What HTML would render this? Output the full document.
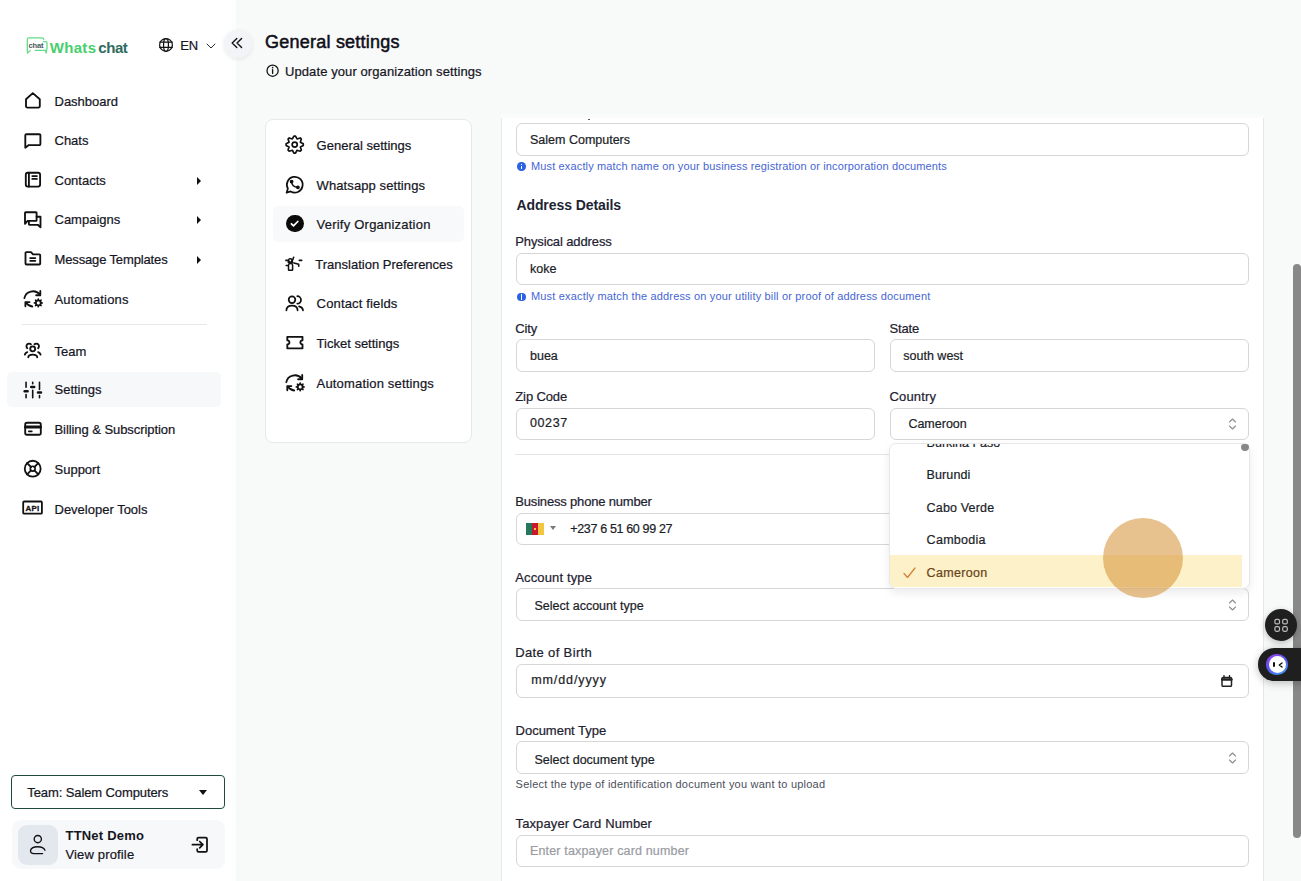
<!DOCTYPE html>
<html><head><meta charset="utf-8"><style>
*{box-sizing:border-box;margin:0;padding:0}
html,body{width:1301px;height:881px;overflow:hidden}
body{font-family:"Liberation Sans",sans-serif;background:#f8f9f9;position:relative;color:#16161f}
.a{position:absolute;white-space:nowrap;line-height:1;-webkit-text-stroke:0.22px currentColor}
.ic{position:absolute;display:block;color:#111}
.box{position:absolute;background:#fff;border:1px solid #d6d6d6;border-radius:6px}
</style></head><body>
<div style="position:absolute;left:0;top:0;width:232px;height:881px;background:#fff"></div>
<div style="position:absolute;left:232px;top:0;width:4px;height:881px;background:#fcfdfd"></div>
<svg style="position:absolute;left:0;top:0" width="240" height="70" fill="none" stroke-linecap="round" stroke-linejoin="round"><path d="M43.8 39.3 Q43.5 37.9 42 37.9 H29 Q27.3 37.9 27.3 39.7 V50.5 L27.6 53.1 L30.2 50.4" stroke="#62dc86" stroke-width="1.3"/><path d="M43.4 41.7 H45.6 Q47 41.7 47 43.1 V48.9 Q47 50.3 45.6 50.3 H35.2 M45.1 50.3 L46.3 53.1 V50.6" stroke="#62dc86" stroke-width="1.3"/><text x="28.6" y="47.8" font-family="Liberation Sans" font-size="7.6" font-weight="bold" fill="#48595b" letter-spacing="-0.2">chat</text></svg>
<div class="a " style="left:49.8px;top:39.80px;font-size:15px;color:#47cf6d;font-weight:bold;-webkit-text-stroke:0;letter-spacing:0.3px;">Whats</div>
<div class="a " style="left:98.3px;top:39.80px;font-size:15px;color:#2f6a5d;font-weight:bold;-webkit-text-stroke:0;letter-spacing:-0.45px;">chat</div>
<div class="a " style="left:180.2px;top:39.00px;font-size:13px;color:#16161f;">EN</div>
<svg class="ic" style="left:206px;top:43px;" width="10" height="6" viewBox="0 0 10 6" fill="none" stroke="currentColor" stroke-linecap="round" stroke-linejoin="round" stroke-width="0.9"><path d="M1 1l4 4 4-4"/></svg>
<div style="position:absolute;left:223.5px;top:30px;width:28px;height:28px;border-radius:50%;background:#f3f4f7;box-shadow:0 1px 4px rgba(0,0,0,.09)"></div>
<div style="position:absolute;left:7px;top:372px;width:214px;height:35px;border-radius:5px;background:#f7f8fa"></div>
<div class="a " style="left:54.5px;top:94.50px;font-size:13px;color:#16161f;">Dashboard</div>
<div class="a " style="left:54.5px;top:134.00px;font-size:13px;color:#16161f;">Chats</div>
<div class="a " style="left:54.5px;top:173.80px;font-size:13px;color:#16161f;">Contacts</div>
<div class="a " style="left:54.5px;top:213.20px;font-size:13px;color:#16161f;">Campaigns</div>
<div class="a " style="left:54.5px;top:253.00px;font-size:13px;color:#16161f;letter-spacing:-0.14px;">Message Templates</div>
<div class="a " style="left:54.5px;top:292.80px;font-size:13px;color:#16161f;letter-spacing:0.17px;">Automations</div>
<div class="a " style="left:54.5px;top:344.50px;font-size:13px;color:#16161f;">Team</div>
<div class="a " style="left:54.5px;top:383.30px;font-size:13px;color:#16161f;">Settings</div>
<div class="a " style="left:54.5px;top:423.00px;font-size:13px;color:#16161f;letter-spacing:-0.07px;">Billing &amp; Subscription</div>
<div class="a " style="left:54.5px;top:463.00px;font-size:13px;color:#16161f;">Support</div>
<div class="a " style="left:54.5px;top:502.50px;font-size:13px;color:#16161f;">Developer Tools</div>
<div style="position:absolute;left:197px;top:176.5px;width:0;height:0;border-top:4px solid transparent;border-bottom:4px solid transparent;border-left:4.5px solid #111"></div>
<div style="position:absolute;left:197px;top:215.9px;width:0;height:0;border-top:4px solid transparent;border-bottom:4px solid transparent;border-left:4.5px solid #111"></div>
<div style="position:absolute;left:197px;top:255.7px;width:0;height:0;border-top:4px solid transparent;border-bottom:4px solid transparent;border-left:4.5px solid #111"></div>
<div style="position:absolute;left:21.5px;top:324px;width:185px;height:1px;background:#e5e7eb"></div>
<div style="position:absolute;left:11px;top:775px;width:214px;height:34px;border:1px solid #1f4a3c;border-radius:4px;background:#fff"></div>
<div class="a " style="left:27.3px;top:786.30px;font-size:13px;color:#16161f;letter-spacing:-0.1px;">Team: Salem Computers</div>
<div style="position:absolute;left:199px;top:790px;width:0;height:0;border-left:4.5px solid transparent;border-right:4.5px solid transparent;border-top:5px solid #111"></div>
<div style="position:absolute;left:12px;top:820px;width:213px;height:49px;border-radius:9px;background:#f7f8fa"></div>
<div style="position:absolute;left:18px;top:825px;width:40px;height:40px;border-radius:9px;background:#e3e7ee"></div>
<div class="a " style="left:65.5px;top:828.70px;font-size:13px;color:#16161f;font-weight:bold;-webkit-text-stroke:0;letter-spacing:0.2px;">TTNet Demo</div>
<div class="a " style="left:65.5px;top:848.00px;font-size:13px;color:#16161f;letter-spacing:0.15px;">View profile</div>
<div class="a " style="left:265px;top:32.76px;font-size:18px;color:#0e0e18;letter-spacing:0.23px;-webkit-text-stroke:0.5px #0e0e18;">General settings</div>
<div class="a " style="left:285px;top:64.70px;font-size:13px;color:#16161f;letter-spacing:0.09px;">Update your organization settings</div>
<div style="position:absolute;left:265px;top:119px;width:206.5px;height:324px;background:#fff;border:1px solid #e7e8eb;border-radius:8px"></div>
<div style="position:absolute;left:273px;top:206px;width:191px;height:36px;border-radius:5px;background:#f8f9fa"></div>
<div class="a " style="left:316.6px;top:139.00px;font-size:13px;color:#16161f;">General settings</div>
<div class="a " style="left:316.6px;top:179.00px;font-size:13px;color:#16161f;letter-spacing:0.09px;">Whatsapp settings</div>
<div class="a " style="left:316.6px;top:218.00px;font-size:13px;color:#16161f;letter-spacing:0.22px;">Verify Organization</div>
<div class="a " style="left:315.3px;top:258.40px;font-size:13px;color:#16161f;">Translation Preferences</div>
<div class="a " style="left:316.6px;top:297.30px;font-size:13px;color:#16161f;letter-spacing:0.15px;">Contact fields</div>
<div class="a " style="left:316.6px;top:337.00px;font-size:13px;color:#16161f;">Ticket settings</div>
<div class="a " style="left:316.6px;top:376.50px;font-size:13px;color:#16161f;letter-spacing:0.17px;">Automation settings</div>
<div style="position:absolute;left:285.8px;top:214.7px;width:17.8px;height:17.8px;border-radius:50%;background:#0b0b0b"></div>
<svg style="position:absolute;left:0;top:0" width="1301" height="881" fill="none" stroke="#fff" stroke-width="1.75" stroke-linecap="round" stroke-linejoin="round"><path d="M291.4 223.8 L293.5 225.9 L297.8 221.5"/></svg>
<div style="position:absolute;left:501px;top:118px;width:763px;height:780px;background:#fff;border-left:1px solid #e7e8eb;border-right:1px solid #e7e8eb"></div>
<div style="position:absolute;left:501px;top:112px;width:763px;height:6px;background:linear-gradient(rgba(255,255,255,0),rgba(255,255,255,.6))"></div>
<div style="position:absolute;left:588px;top:118.6px;width:2.2px;height:1px;background:#444;border-radius:1px"></div>
<div class="box" style="left:516px;top:123px;width:733px;height:33px"></div>
<div class="a " style="left:530px;top:133.72px;font-size:12.5px;color:#1b1e28;">Salem Computers</div>
<div style="position:absolute;left:517px;top:162.3px;width:8.5px;height:8.5px;border-radius:50%;background:#2b62e3"></div>
<div style="position:absolute;left:520.7px;top:165.8px;width:1.2px;height:3.3px;background:#fff"></div>
<div style="position:absolute;left:520.7px;top:163.9px;width:1.2px;height:1.2px;background:#fff"></div>
<div class="a " style="left:531px;top:161.19px;font-size:11px;color:#4666d4;letter-spacing:0.14px;-webkit-text-stroke:0;">Must exactly match name on your business registration or incorporation documents</div>
<div class="a " style="left:516.4px;top:197.95px;font-size:14px;color:#1d2433;font-weight:bold;-webkit-text-stroke:0;letter-spacing:-0.08px;">Address Details</div>
<div class="a " style="left:515.3px;top:235.10px;font-size:13px;color:#1e2230;letter-spacing:-0.12px;">Physical address</div>
<div class="box" style="left:516px;top:253px;width:733px;height:32px"></div>
<div class="a " style="left:530px;top:262.62px;font-size:12.5px;color:#1b1e28;">koke</div>
<div style="position:absolute;left:517px;top:292.8px;width:8.5px;height:8.5px;border-radius:50%;background:#2b62e3"></div>
<div style="position:absolute;left:520.7px;top:296.3px;width:1.2px;height:3.3px;background:#fff"></div>
<div style="position:absolute;left:520.7px;top:294.40000000000003px;width:1.2px;height:1.2px;background:#fff"></div>
<div class="a " style="left:531px;top:291.09px;font-size:11px;color:#4666d4;letter-spacing:0.17px;-webkit-text-stroke:0;">Must exactly match the address on your utility bill or proof of address document</div>
<div class="a " style="left:515.3px;top:321.90px;font-size:13px;color:#1e2230;letter-spacing:-0.12px;">City</div>
<div class="a " style="left:889.4px;top:321.90px;font-size:13px;color:#1e2230;letter-spacing:-0.12px;">State</div>
<div class="box" style="left:516px;top:339px;width:359px;height:33px"></div>
<div class="box" style="left:890px;top:339px;width:359px;height:33px"></div>
<div class="a " style="left:530px;top:350.42px;font-size:12.5px;color:#1b1e28;">buea</div>
<div class="a " style="left:903.3px;top:350.42px;font-size:12.5px;color:#1b1e28;">south west</div>
<div class="a " style="left:515.3px;top:390.00px;font-size:13px;color:#1e2230;letter-spacing:-0.12px;">Zip Code</div>
<div class="a " style="left:889.4px;top:390.00px;font-size:13px;color:#1e2230;letter-spacing:0.2px;">Country</div>
<div class="box" style="left:516px;top:408px;width:359px;height:32px"></div>
<div class="box" style="left:890px;top:408px;width:359px;height:32px"></div>
<div class="a " style="left:530px;top:417.12px;font-size:12.5px;color:#1b1e28;letter-spacing:0.6px;">00237</div>
<div class="a " style="left:908.4px;top:418.12px;font-size:12.5px;color:#1b1e28;">Cameroon</div>
<svg class="ic" style="left:1228.3px;top:416.8px;color:#8b8d92" width="9" height="14" viewBox="0 0 9 14" fill="none" stroke="currentColor" stroke-linecap="round" stroke-linejoin="round" stroke-width="1.1"><path d="M1.5 5L4.5 2l3 3M1.5 9l3 3 3-3"/></svg>
<div style="position:absolute;left:515px;top:454px;width:734px;height:1px;background:#e3e4e4"></div>
<div class="a " style="left:515.3px;top:494.80px;font-size:13px;color:#1e2230;letter-spacing:-0.18px;">Business phone number</div>
<div class="box" style="left:516px;top:513px;width:733px;height:32px"></div>
<div style="position:absolute;left:526px;top:522.7px;width:6px;height:12.3px;background:#23795a"></div>
<div style="position:absolute;left:532px;top:522.7px;width:6px;height:12.3px;background:#c8182f"></div>
<div style="position:absolute;left:538px;top:522.7px;width:6.3px;height:12.3px;background:#f3c63f"></div>
<div style="position:absolute;left:534.2px;top:527.8px;width:1.8px;height:1.8px;background:#f3c63f"></div>
<div style="position:absolute;left:550.3px;top:526.3px;width:0;height:0;border-left:3.2px solid transparent;border-right:3.2px solid transparent;border-top:4px solid #7a7a7a"></div>
<div class="a " style="left:570.3px;top:523.42px;font-size:12.5px;color:#1b1e28;letter-spacing:-0.35px;">+237 6 51 60 99 27</div>
<div class="a " style="left:515.3px;top:571.20px;font-size:13px;color:#1e2230;letter-spacing:0.13px;">Account type</div>
<div class="box" style="left:516px;top:588px;width:733px;height:33px"></div>
<div class="a " style="left:534.5px;top:600.42px;font-size:12.5px;color:#1b1e28;">Select account type</div>
<svg class="ic" style="left:1228.3px;top:598px;color:#8b8d92" width="9" height="14" viewBox="0 0 9 14" fill="none" stroke="currentColor" stroke-linecap="round" stroke-linejoin="round" stroke-width="1.1"><path d="M1.5 5L4.5 2l3 3M1.5 9l3 3 3-3"/></svg>
<div class="a " style="left:515.3px;top:646.00px;font-size:13px;color:#1e2230;letter-spacing:0.35px;">Date of Birth</div>
<div class="box" style="left:516px;top:664px;width:733px;height:34px"></div>
<div class="a " style="left:531.2px;top:674.22px;font-size:12.5px;color:#1b1e28;letter-spacing:0.9px;">mm/dd/yyyy</div>
<svg class="ic" style="left:1221px;top:675px;color:#222" width="11.5" height="12" viewBox="0 0 11.5 12" fill="none" stroke="currentColor" stroke-linecap="round" stroke-linejoin="round"><rect x="1" y="2.5" width="9.5" height="8.8" rx="1" stroke-width="1.5"/><path d="M1 4.5h9.5" stroke-width="2.5"/><path d="M3 .5v2.5M8.5.5v2.5" stroke-width="1.3"/></svg>
<div class="a " style="left:515.6px;top:724.40px;font-size:13px;color:#1e2230;letter-spacing:-0.02px;">Document Type</div>
<div class="box" style="left:516px;top:741px;width:733px;height:33px"></div>
<div class="a " style="left:534.5px;top:753.92px;font-size:12.5px;color:#1b1e28;">Select document type</div>
<svg class="ic" style="left:1228.3px;top:751px;color:#8b8d92" width="9" height="14" viewBox="0 0 9 14" fill="none" stroke="currentColor" stroke-linecap="round" stroke-linejoin="round" stroke-width="1.1"><path d="M1.5 5L4.5 2l3 3M1.5 9l3 3 3-3"/></svg>
<div class="a " style="left:515.6px;top:778.89px;font-size:11px;color:#4b4f5a;letter-spacing:0.225px;-webkit-text-stroke:0;">Select the type of identification document you want to upload</div>
<div class="a " style="left:515.6px;top:817.20px;font-size:13px;color:#1e2230;letter-spacing:0.1px;">Taxpayer Card Number</div>
<div class="box" style="left:516px;top:835px;width:733px;height:32px"></div>
<div class="a " style="left:530px;top:845.02px;font-size:12.5px;color:#9a9ca3;letter-spacing:0.16px;">Enter taxpayer card number</div>
<div style="position:absolute;left:889px;top:443px;width:361px;height:145.5px;background:#fff;border:1px solid #e8e8e8;border-radius:7px;box-shadow:0 4px 10px rgba(0,0,0,.08);overflow:hidden">
<div style="position:absolute;left:0;top:111px;width:352px;height:32px;background:#fcf1c9"></div>
</div>
<div style="position:absolute;left:890px;top:444px;width:359px;height:144px;overflow:hidden">
<div class="a " style="left:36.6px;top:-7.28px;font-size:12.5px;color:#1b1e28;">Burkina Faso</div>
</div>
<div class="a " style="left:926.6px;top:469.42px;font-size:12.5px;color:#1b1e28;letter-spacing:0.1px;">Burundi</div>
<div class="a " style="left:926.6px;top:502.22px;font-size:12.5px;color:#1b1e28;letter-spacing:0.17px;">Cabo Verde</div>
<div class="a " style="left:926.6px;top:534.42px;font-size:12.5px;color:#1b1e28;letter-spacing:0.28px;">Cambodia</div>
<div class="a " style="left:926.6px;top:567.42px;font-size:12.5px;color:#6a4419;letter-spacing:0.33px;">Cameroon</div>
<svg class="ic" style="left:902.5px;top:566.5px;color:#d98236" width="13" height="11.5" viewBox="0 0 13 11.5" fill="none" stroke="currentColor" stroke-linecap="round" stroke-linejoin="round" stroke-width="1.3"><path d="M1 6.5l3.5 4L12 1"/></svg>
<div style="position:absolute;left:1241px;top:443.7px;width:8px;height:7.2px;border-radius:3px 3px 4px 4px;background:#878787"></div>
<div style="position:absolute;left:1103px;top:518px;width:80px;height:80px;border-radius:50%;background:rgba(214,150,60,.58)"></div>
<div style="position:absolute;left:1293px;top:264px;width:8px;height:574px;border-radius:4px;background:#888"></div>
<div style="position:absolute;left:1265px;top:608.7px;width:32px;height:32px;border-radius:50%;background:#1f1f1f;box-shadow:0 2px 6px rgba(0,0,0,.25)"></div>
<svg style="position:absolute;left:0;top:0" width="1301" height="881" fill="none" stroke="#bdbdbd" stroke-width="1.2"><rect x="1274.9" y="619.3" width="4.6" height="4.6" rx="1.5"/><rect x="1282.7" y="619.3" width="4.6" height="4.6" rx="1.5"/><rect x="1274.9" y="626.7" width="4.6" height="4.6" rx="1.5"/><rect x="1282.7" y="626.7" width="4.6" height="4.6" rx="1.5"/></svg><div style="position:absolute;left:1258.4px;top:648px;width:60px;height:32.5px;border-radius:16.25px 0 0 16.25px;background:#1f1f1f;box-shadow:0 2px 8px rgba(0,0,0,.25)"></div>
<div style="position:absolute;left:1266px;top:653.7px;width:22px;height:21.5px;border-radius:50%;background:linear-gradient(150deg,#a23ff0 0%,#5b52f2 45%,#3aa6ee 100%)"></div>
<div style="position:absolute;left:1268.5px;top:656.2px;width:17px;height:16.5px;border-radius:50%;background:#fff"></div>
<div style="position:absolute;left:1272.6px;top:662.3px;width:2.2px;height:4.4px;border-radius:1px;background:#111"></div>
<svg class="ic" style="left:1278px;top:661.5px;" width="5" height="6" viewBox="0 0 5 6" fill="none" stroke="currentColor" stroke-linecap="round" stroke-linejoin="round" stroke-width="1.4"><path d="M4 1L1.3 3 4 5"/></svg>
<svg style="position:absolute;left:0;top:0" width="1301" height="881" fill="none" stroke="#111" stroke-linecap="round" stroke-linejoin="round"><g stroke-width="1.25"><circle cx="166" cy="44.9" r="6.4"/><path d="M159.8 42.2h12.4M159.8 47.4h12.4"/><ellipse cx="166" cy="44.9" rx="2.45" ry="6.4"/></g><path stroke-width="1.4" d="M236.8 38.4 L232.2 43.1 L236.8 47.6 M241.6 38.4 L237 43.1 L241.6 47.6"/><g stroke-width="1.3"><circle cx="272.6" cy="70.7" r="5.6"/><path d="M272.6 69.6v3.8"/><path d="M272.6 67.6v.1" stroke-width="1.6"/></g><g stroke-width="1.85"><path d="M26 99.2 L32.8 93.1 L39.8 99.2 V106.2 a1.4 1.4 0 0 1-1.4 1.4 H27.4 a1.4 1.4 0 0 1-1.4-1.4 Z"/></g><g stroke-width="1.85"><path d="M25.3 147.7 V135.3 a1.1 1.1 0 0 1 1.1-1.1 H39.3 a1.1 1.1 0 0 1 1.1 1.1 V144 a1.1 1.1 0 0 1-1.1 1.1 H28.8 Z"/></g><g stroke-width="1.85"><rect x="25.8" y="172.7" width="14.3" height="13.9" rx="2"/><path d="M28.9 172.7v13.9M32.3 176.1h4.6M32.3 178.9h4.6"/></g><g stroke-width="1.85"><path d="M25 223.8 V212.8 a.6.6 0 0 1 .6-.6 H36 a.6.6 0 0 1 .6.6 V220.3 a.6.6 0 0 1-.6.6 H27.6 Z"/><path d="M36.6 216.7 H40.5 V227.3 L37.8 224.8 H29.4 a.5.5 0 0 1-.5-.5 V220.9"/></g><g stroke-width="1.85"><path d="M25.5 253 a.9.9 0 0 1 .9-.9 H31 L33 254.3 H39.3 a.9.9 0 0 1 .9.9 V263.5 a1 1 0 0 1-1 1 H26.5 a1 1 0 0 1-1-1 Z"/><path d="M30.2 258.1 H35.3 M30.2 260.8 H35.3"/></g><g stroke-width="1.85"><path d="M24.40 298.20 C25.60 291.20 35.20 288.60 39.80 294.60"/><path d="M40.30 290.90 L40.30 295.20 L36.20 295.20"/><path d="M25.40 306.20 L25.40 302.10 L29.50 302.10"/><path d="M25.90 302.60 C27.60 305.20 30.20 306.30 32.30 306.50"/><path stroke="none" fill="#111" fill-rule="evenodd" d="M37.08 299.94 L37.82 298.22 L38.78 298.22 L39.52 299.94 L39.52 299.94 L41.27 299.26 L41.94 299.93 L41.26 301.68 L41.26 301.68 L42.98 302.42 L42.98 303.38 L41.26 304.12 L41.26 304.12 L41.94 305.87 L41.27 306.54 L39.52 305.86 L39.52 305.86 L38.78 307.58 L37.82 307.58 L37.08 305.86 L37.08 305.86 L35.33 306.54 L34.66 305.87 L35.34 304.12 L35.34 304.12 L33.62 303.38 L33.62 302.42 L35.34 301.68 L35.34 301.68 L34.66 299.93 L35.33 299.26 L37.08 299.94Z M39.85 302.90 A1.55 1.55 0 1 0 36.75 302.90 A1.55 1.55 0 1 0 39.85 302.90Z"/></g><g stroke-width="1.85"><circle cx="32.7" cy="348.8" r="2.5"/><path d="M28.3 357.3 C28.3 355.3 30 354.6 32.7 354.6 C35.4 354.6 37.2 355.3 37.2 357.3"/><path d="M27.3 348.2 A2.3 2.3 0 1 1 30.9 344.3"/><path d="M38.1 348.2 A2.3 2.3 0 1 0 34.5 344.3"/><path d="M24.8 354.6 C25.3 353.2 26.2 352.4 27.3 352.1"/><path d="M40.6 354.6 C40.1 353.2 39.2 352.4 38.1 352.1"/></g><g stroke-width="1.6"><path d="M26.05 382.2v5M26.05 394.5v3.2M32.7 382.3v1.5M32.7 390.3v7.4M39.5 382.2v7.2M39.5 395.6v2.1"/></g><g stroke-width="2.5"><path d="M24.6 391.2h3M31.2 387h3M38 392.5h3"/></g><g stroke-width="1.85"><rect x="25.2" y="422.7" width="15.6" height="12" rx="1.8"/><path d="M25.5 426.9h15" stroke-width="3"/><path d="M28.8 431.3h3" stroke-width="1.7"/></g><g stroke-width="1.8"><circle cx="32.7" cy="468.7" r="7.95"/><circle cx="32.7" cy="468.7" r="2.4" stroke-width="1.6"/><path d="M27.1 463.1l3.9 3.9M34.4 470.4l3.9 3.9M38.3 463.1l-3.9 3.9M31 470.4l-3.9 3.9"/></g><rect x="23.2" y="501.5" width="18.7" height="12.2" rx="1" stroke-width="1.8"/><text x="32.6" y="510.6" text-anchor="middle" font-family="Liberation Sans" font-weight="bold" font-size="7.8" fill="#111" stroke="#111" stroke-width="0.3" letter-spacing=".35">API</text><g stroke-width="1.35"><circle cx="37.8" cy="839.1" r="3.6"/><path d="M45 850.2 C43 845.6 32 845.6 30.6 850.2 C30.1 852.3 31.6 853.6 34 853.6 H42.6"/></g><g stroke-width="1.75"><path d="M197.2 840.2 V839 a1.4 1.4 0 0 1 1.4-1.4 H205.6 a1.4 1.4 0 0 1 1.4 1.4 V850.4 a1.4 1.4 0 0 1-1.4 1.4 H198.6 a1.4 1.4 0 0 1-1.4-1.4 V849.2"/><path d="M192.4 844.7 H202.6 M199.7 841.5 L202.9 844.7 L199.7 847.9"/></g><g stroke-width="1.7"><path d="M292.37 138.96 L293.89 136.04 L295.51 136.04 L297.03 138.96 L297.03 138.96 L300.18 137.97 L301.33 139.12 L300.34 142.27 L300.34 142.27 L303.26 143.79 L303.26 145.41 L300.34 146.93 L300.34 146.93 L301.33 150.08 L300.18 151.23 L297.03 150.24 L297.03 150.24 L295.51 153.16 L293.89 153.16 L292.37 150.24 L292.37 150.24 L289.22 151.23 L288.07 150.08 L289.06 146.93 L289.06 146.93 L286.14 145.41 L286.14 143.79 L289.06 142.27 L289.06 142.27 L288.07 139.12 L289.22 137.97 L292.37 138.96Z"/><circle cx="294.7" cy="144.6" r="2.55"/></g><g stroke-width="1.75"><path d="M286.6 192.7 L287.9 188.6 A7.9 7.9 0 1 1 290.6 191.4 Z"/><path d="M291.5 181.5 C291.8 184.6 294.2 187.1 297.8 187.3" stroke-width="1.6"/><circle cx="291.6" cy="181.6" r="1.05" fill="#111"/><circle cx="297.9" cy="187.3" r="1.05" fill="#111"/></g><g stroke-width="1.5"><path d="M288.5 269.8 V265.2 Q288.5 263.6 290.1 263.6 H291 Q292.6 263.6 292.6 265.2 V269.8 Q292.6 270.3 292.1 270.3 H289 Q288.5 270.3 288.5 269.8 Z"/></g><path stroke="none" fill="#111" fill-rule="evenodd" d="M287.6 262.9 Q287.2 258.1 290.3 258.1 Q293.3 258.1 293.2 262.9 Z M290.3 259.6 a.9 .8 0 1 0 .01 0Z"/><g stroke-width="1.6"><path d="M285.9 260.4 H287.8 M286.2 265.5 H287.9 M293.7 257.3 L291.9 261.6 M293.9 262.9 L298.7 264.3 V266.3 M299.3 260.4 H301.7"/></g><g stroke-width="1.75"><circle cx="292" cy="299.7" r="3.3"/><path d="M286.4 310.3 C286.4 306.9 288.9 305.6 292 305.6 C295.1 305.6 297.6 306.9 297.6 310.3"/><path d="M297.3 296.2 A3.7 3.7 0 0 1 297.3 303.6"/><path d="M299.1 306.4 C301.4 307.1 302.9 308.3 303 310.3"/></g><g stroke-width="1.85"><path d="M287.3 336.8 H302.5 V340.3 A2.1 2.1 0 0 0 302.5 344.5 V348.3 H287.3 V344.5 A2.1 2.1 0 0 0 287.3 340.3 Z"/></g><g stroke-width="1.85"><path d="M286.30 382.20 C287.50 375.20 297.10 372.60 301.70 378.60"/><path d="M302.20 374.90 L302.20 379.20 L298.10 379.20"/><path d="M287.30 390.20 L287.30 386.10 L291.40 386.10"/><path d="M287.80 386.60 C289.50 389.20 292.10 390.30 294.20 390.50"/><path stroke="none" fill="#111" fill-rule="evenodd" d="M298.98 383.94 L299.72 382.22 L300.68 382.22 L301.42 383.94 L301.42 383.94 L303.17 383.26 L303.84 383.93 L303.16 385.68 L303.16 385.68 L304.88 386.42 L304.88 387.38 L303.16 388.12 L303.16 388.12 L303.84 389.87 L303.17 390.54 L301.42 389.86 L301.42 389.86 L300.68 391.58 L299.72 391.58 L298.98 389.86 L298.98 389.86 L297.23 390.54 L296.56 389.87 L297.24 388.12 L297.24 388.12 L295.52 387.38 L295.52 386.42 L297.24 385.68 L297.24 385.68 L296.56 383.93 L297.23 383.26 L298.98 383.94Z M301.75 386.90 A1.55 1.55 0 1 0 298.65 386.90 A1.55 1.55 0 1 0 301.75 386.90Z"/></g></svg>
</body></html>
